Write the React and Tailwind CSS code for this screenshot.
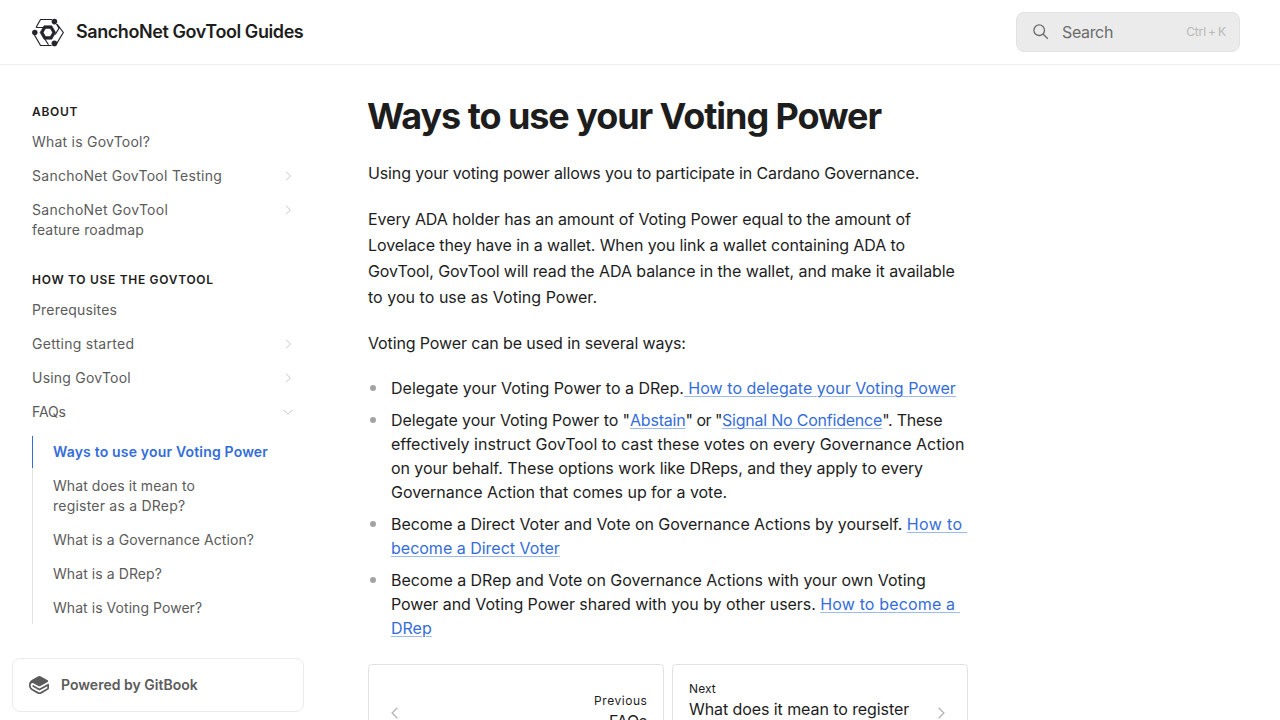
import { SiGitbook } from "react-icons/si";

function Chevron({ className = "", size = 12, d = "M4 1.6 8.3 6 4 10.4", stroke = "#b4b4b4", width = 0.75 }) {
  return (
    <svg className={className} width={size} height={size} viewBox="0 0 12 12" fill="none" stroke={stroke} strokeWidth={width}>
      <path d={d} />
    </svg>
  );
}

function Logo() {
  return (
    <svg width="32" height="32" viewBox="0 0 32 32" fill="none" stroke="#25232e" strokeWidth="1.2">
      <path d="M4 11.5 8.5 3.5H20M25 8 31.3 16.5 24 28.8M19.5 29.5H8.5L2.5 19M4.5 11.5H12M24.5 8 27 12.2 23.2 18.5M12.5 22.5 16.5 28.8" />
      <path d="M12 9.8h7.8l3.9 6.7-3.9 6.7H12l-3.9-6.7z" fill="#25232e" stroke="#25232e" strokeWidth="0.6" />
      <path d="M13.7 12.8h4.4l2.2 3.7-2.2 3.7h-4.4l-2.2-3.7z" fill="#fff" stroke="none" />
      <g fill="#25232e" stroke="none">
        <circle cx="22.4" cy="5.6" r="2.8" />
        <circle cx="2.8" cy="16.5" r="2.7" />
        <circle cx="22.4" cy="27.4" r="2.8" />
      </g>
    </svg>
  );
}

function NavItem({ children, arrow, open, tracking = "tracking-[0.27px]" }) {
  return (
    <div className={`flex justify-between py-[7px] pr-[10px] whitespace-nowrap ${tracking}`}>
      <span>{children}</span>
      {arrow && <Chevron className="mt-1 shrink-0" d={open ? "M1.2 4 6 8 10.8 4" : undefined} />}
    </div>
  );
}

function A({ children, tracking = "" }) {
  return (
    <span className={`whitespace-pre text-[#346ddb] underline decoration-[#9dbaf2] decoration-1 underline-offset-2 ${tracking}`}>
      {children}
    </span>
  );
}

function Li({ children }) {
  return (
    <li className="flex">
      <span className="mt-[9px] ml-[2px] mr-[15px] size-1.5 shrink-0 rounded-full bg-[#a3a3a3]" />
      <div className="w-[577px] whitespace-nowrap">{children}</div>
    </li>
  );
}

export default function App() {
  return (
    <div className="flex h-[720px] w-[1280px] flex-col overflow-hidden bg-white font-['Inter',sans-serif] text-[#1d1d1d]">
      <header className="flex h-[65px] shrink-0 items-center border-b border-[#eeeeee] pr-10 pl-8">
        <Logo />
        <div className="ml-3 text-[18px] leading-6 font-semibold tracking-[-0.42px]">SanchoNet GovTool Guides</div>
        <div className="ml-auto flex h-10 w-56 items-center rounded-lg border border-[#e2e2e2] bg-[#ebebeb] pr-[13px] pl-4 text-[#6b6b6b]">
          <svg width="16" height="16" viewBox="0 0 16 16" fill="none" stroke="#6b6b6b" strokeWidth="1.3">
            <circle cx="6.2" cy="6.2" r="5.3" />
            <path d="m10 10 4.8 4.8" />
          </svg>
          <span className="ml-[13px] text-base tracking-[-0.35px]">Search</span>
          <span className="ml-auto text-xs tracking-[-0.1px] text-[#b8b8b8]">Ctrl&#8201;+&#8201;K</span>
        </div>
      </header>
      <div className="flex min-h-0 flex-1">
        <aside className="flex w-[304px] shrink-0 flex-col text-sm leading-5 text-[#5b5b5b]">
          <nav className="h-[593px] pt-[39px] pl-8">
            <div className="mb-[5px] text-xs leading-4 font-semibold tracking-[0.7px] text-[#1d1d1d]">ABOUT</div>
            <NavItem tracking="tracking-[0.23px]">What is GovTool?</NavItem>
            <NavItem arrow>SanchoNet GovTool Testing</NavItem>
            <NavItem arrow tracking="tracking-[0.3px]">SanchoNet GovTool<br /><span className="tracking-[0.15px]">feature roadmap</span></NavItem>
            <div className="mt-[25px] mb-[5px] text-xs leading-4 font-semibold tracking-[0.7px] text-[#1d1d1d]">HOW TO USE THE GOVTOOL</div>
            <NavItem tracking="tracking-[0.18px]">Prerequsites</NavItem>
            <NavItem arrow>Getting started</NavItem>
            <NavItem arrow tracking="tracking-[0.22px]">Using GovTool</NavItem>
            <NavItem arrow open tracking="tracking-[-0.1px]">FAQs</NavItem>
            <div className="mt-[7px] flex h-[188px]">
              <div className="w-px shrink-0 bg-[#e2e2e2]">
                <div className="h-8 bg-[#346ddb]" />
              </div>
              <div className="-mt-px pl-5">
                <div className="py-[7px] font-semibold tracking-[0.18px] text-[#346ddb]">Ways to use your Voting Power</div>
                <NavItem tracking="tracking-[0.08px]">What does it mean to<br /><span className="tracking-[0.22px]">register as a DRep?</span></NavItem>
                <NavItem tracking="tracking-[0.08px]">What is a Governance Action?</NavItem>
                <NavItem tracking="tracking-[0.08px]">What is a DRep?</NavItem>
                <NavItem tracking="tracking-[0.05px]">What is Voting Power?</NavItem>
              </div>
            </div>
          </nav>
          <div className="ml-3 flex h-[54px] shrink-0 items-center rounded-lg border border-[#ebebeb] pl-4 font-semibold">
            <SiGitbook size={20} />
            <span className="ml-3 tracking-[0.02px]">Powered by GitBook</span>
          </div>
        </aside>
        <main className="ml-16 w-[600px] shrink-0 pt-[29px]">
          <h1 className="-ml-px text-4xl leading-[45px] font-bold tracking-[-1.06px]">Ways to use your Voting Power</h1>
          <div className="mt-[21px] flex flex-col gap-5 leading-[26px] whitespace-nowrap">
            <p className="tracking-[-0.135px]">Using your voting power allows you to participate in Cardano Governance.</p>
            <p className="tracking-[-0.08px]">Every ADA holder has an amount of Voting Power equal to the amount of<br /><span className="tracking-[-0.1px]">Lovelace they have in a wallet. When you link a wallet containing ADA to</span><br />GovTool, GovTool will read the ADA balance in the wallet, and make it available<br /><span className="tracking-[0.03px]">to you to use as Voting Power.</span></p>
            <p className="tracking-[-0.12px]">Voting Power can be used in several ways:</p>
          </div>
          <ul className="mt-5 flex flex-col gap-2 leading-6">
            <Li>Delegate your Voting Power to a DRep.<A tracking="tracking-[0.03px]"> How to delegate your Voting Power</A></Li>
            <Li><span className="tracking-[-0.08px]">Delegate your Voting Power to "</span><A tracking="tracking-[-0.2px]">Abstain</A><span className="tracking-[-0.5px]">" or "</span><A tracking="tracking-[-0.22px]">Signal No Confidence</A><span className="tracking-[-0.25px]">". These</span><br />effectively instruct GovTool to cast these votes on every Governance Action<br /><span className="tracking-[-0.07px]">on your behalf. These options work like DReps, and they apply to every</span><br /><span className="tracking-[-0.04px]">Governance Action that comes up for a vote.</span></Li>
            <Li><span className="tracking-[-0.05px]">Become a Direct Voter and Vote on Governance Actions by yourself. </span><A><span className="tracking-[0.35px]">How to&nbsp;</span><br />become a Direct Voter</A></Li>
            <Li><span className="tracking-[-0.03px]">Become a DRep and Vote on Governance Actions with your own Voting</span><br /><span className="tracking-[-0.055px]">Power and Voting Power shared with you by other users. </span><A tracking="tracking-[0.16px]">How to become a&nbsp;<br /><span className="tracking-normal">DRep</span></A></Li>
          </ul>
          <div className="mt-6 grid h-[98px] grid-cols-2 gap-2">
            <div className="flex items-center justify-between rounded border border-[#e2e2e2] px-4">
              <Chevron className="ml-[3px]" size={14} stroke="#b4b4b4" width={1.1} d="M8 1.5 3.5 6 8 10.5" />
              <div className="text-right">
                <div className="-mr-[0.5px] text-xs leading-4 tracking-[0.55px]">Previous</div>
                <div className="leading-6 tracking-[-0.3px]">FAQs</div>
              </div>
            </div>
            <div className="flex items-center justify-between rounded border border-[#e2e2e2] px-4">
              <div>
                <div className="text-xs leading-4 tracking-[0.1px]">Next</div>
                <div className="leading-6 tracking-[-0.08px]">What does it mean to register<br />as a DRep?</div>
              </div>
              <Chevron className="mr-[3px]" size={14} stroke="#b4b4b4" width={1.1} d="M4 1.5 8.5 6 4 10.5" />
            </div>
          </div>
        </main>
      </div>
    </div>
  );
}
